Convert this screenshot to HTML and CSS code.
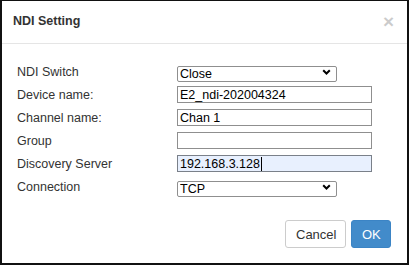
FILE: index.html
```html
<!DOCTYPE html>
<html>
<head>
<meta charset="utf-8">
<link rel="stylesheet" href="styles.css">
</head>
<body>
<div class="modal">
  <div class="modal-header">
    <span class="title">NDI Setting</span>
    <span class="close">×</span>
  </div>
  <div class="modal-body">
    <div class="row">
      <label class="lbl">NDI Switch</label>
      <div class="select-wrap">
        <select class="sel"><option>Close</option></select>
        <svg class="chev" width="9" height="6" viewBox="0 0 9 6"><path d="M1.2 1.2 L4.5 4.5 L7.8 1.2" fill="none" stroke="#000" stroke-width="2"/></svg>
      </div>
    </div>
    <div class="row">
      <label class="lbl">Device name:</label>
      <input class="inp" type="text" value="E2_ndi-202004324">
    </div>
    <div class="row">
      <label class="lbl">Channel name:</label>
      <input class="inp" type="text" value="Chan 1">
    </div>
    <div class="row">
      <label class="lbl">Group</label>
      <input class="inp" type="text" value="">
    </div>
    <div class="row">
      <label class="lbl">Discovery Server</label>
      <div class="inp focused">192.168.3.128<span class="caret"></span></div>
    </div>
    <div class="row">
      <label class="lbl">Connection</label>
      <div class="select-wrap">
        <select class="sel"><option>TCP</option></select>
        <svg class="chev" width="9" height="6" viewBox="0 0 9 6"><path d="M1.2 1.2 L4.5 4.5 L7.8 1.2" fill="none" stroke="#000" stroke-width="2"/></svg>
      </div>
    </div>
  </div>
  <div class="modal-footer">
    <button class="btn btn-default">Cancel</button>
    <button class="btn btn-primary">OK</button>
  </div>
</div>
</body>
</html>
```
FILE: styles.css
```css
* { box-sizing: border-box; }
html, body { margin: 0; padding: 0; background: #fff; }
body { font-family: "Liberation Sans", Arial, sans-serif; color: #333; }

.modal {
  width: 409px;
  height: 265px;
  border: 2px solid #111;
  border-top-width: 1px;
  background: #fff;
  display: flex;
  flex-direction: column;
}

.modal-header {
  height: 43px;
  border-bottom: 1px solid #e5e5e5;
  display: flex;
  align-items: center;
  justify-content: space-between;
  padding: 0 13px 2px 11px;
  flex: none;
}
.title { font-size: 12.5px; font-weight: bold; color: #333; }
.close { font-size: 19px; font-weight: bold; color: #000; opacity: 0.2; line-height: 1; }

.modal-body {
  padding: 16px 0 0 15px;
  display: flex;
  flex-direction: column;
}
.row {
  height: 23px;
  display: flex;
  align-items: center;
}
.lbl {
  width: 160px;
  font-size: 12.5px;
  color: #333;
  flex: none;
}

.inp {
  width: 195px;
  height: 17px;
  border: 1px solid #8f8f8f;
  font-family: "Liberation Sans", Arial, sans-serif;
  font-size: 12.5px;
  color: #000;
  padding: 0 2px;
  margin: 0;
  border-radius: 0;
  outline: none;
  background: #fff;
  display: flex;
  align-items: center;
}
.inp.focused { background: #e8f0fe; border-color: #7a8089; }
.caret { display: inline-block; width: 1px; height: 14px; background: #000; margin-left: 1px; }

.select-wrap { position: relative; width: 160px; height: 16px; }
.sel {
  -webkit-appearance: none;
  appearance: none;
  width: 160px;
  height: 16px;
  border: 1px solid #8f8f8f;
  border-radius: 2px;
  background: #fff;
  font-family: "Liberation Sans", Arial, sans-serif;
  font-size: 12.5px;
  color: #000;
  padding: 0 2px;
  margin: 0;
  line-height: 14px;
}
.chev { position: absolute; right: 6px; top: 5px; pointer-events: none; }

.modal-footer {
  display: flex;
  justify-content: flex-end;
  gap: 5px;
  padding: 22px 16px 0 0;
}
.btn {
  height: 28px;
  font-family: "Liberation Sans", Arial, sans-serif;
  font-size: 13px;
  border-radius: 3px;
  border: 1px solid #ccc;
  padding: 0 10px;
  margin: 0;
}
.btn-default { background: #fff; color: #333; width: 61px; }
.btn-primary { background: #428bca; border-color: #3b84c5; color: #fff; width: 40px; }
```
